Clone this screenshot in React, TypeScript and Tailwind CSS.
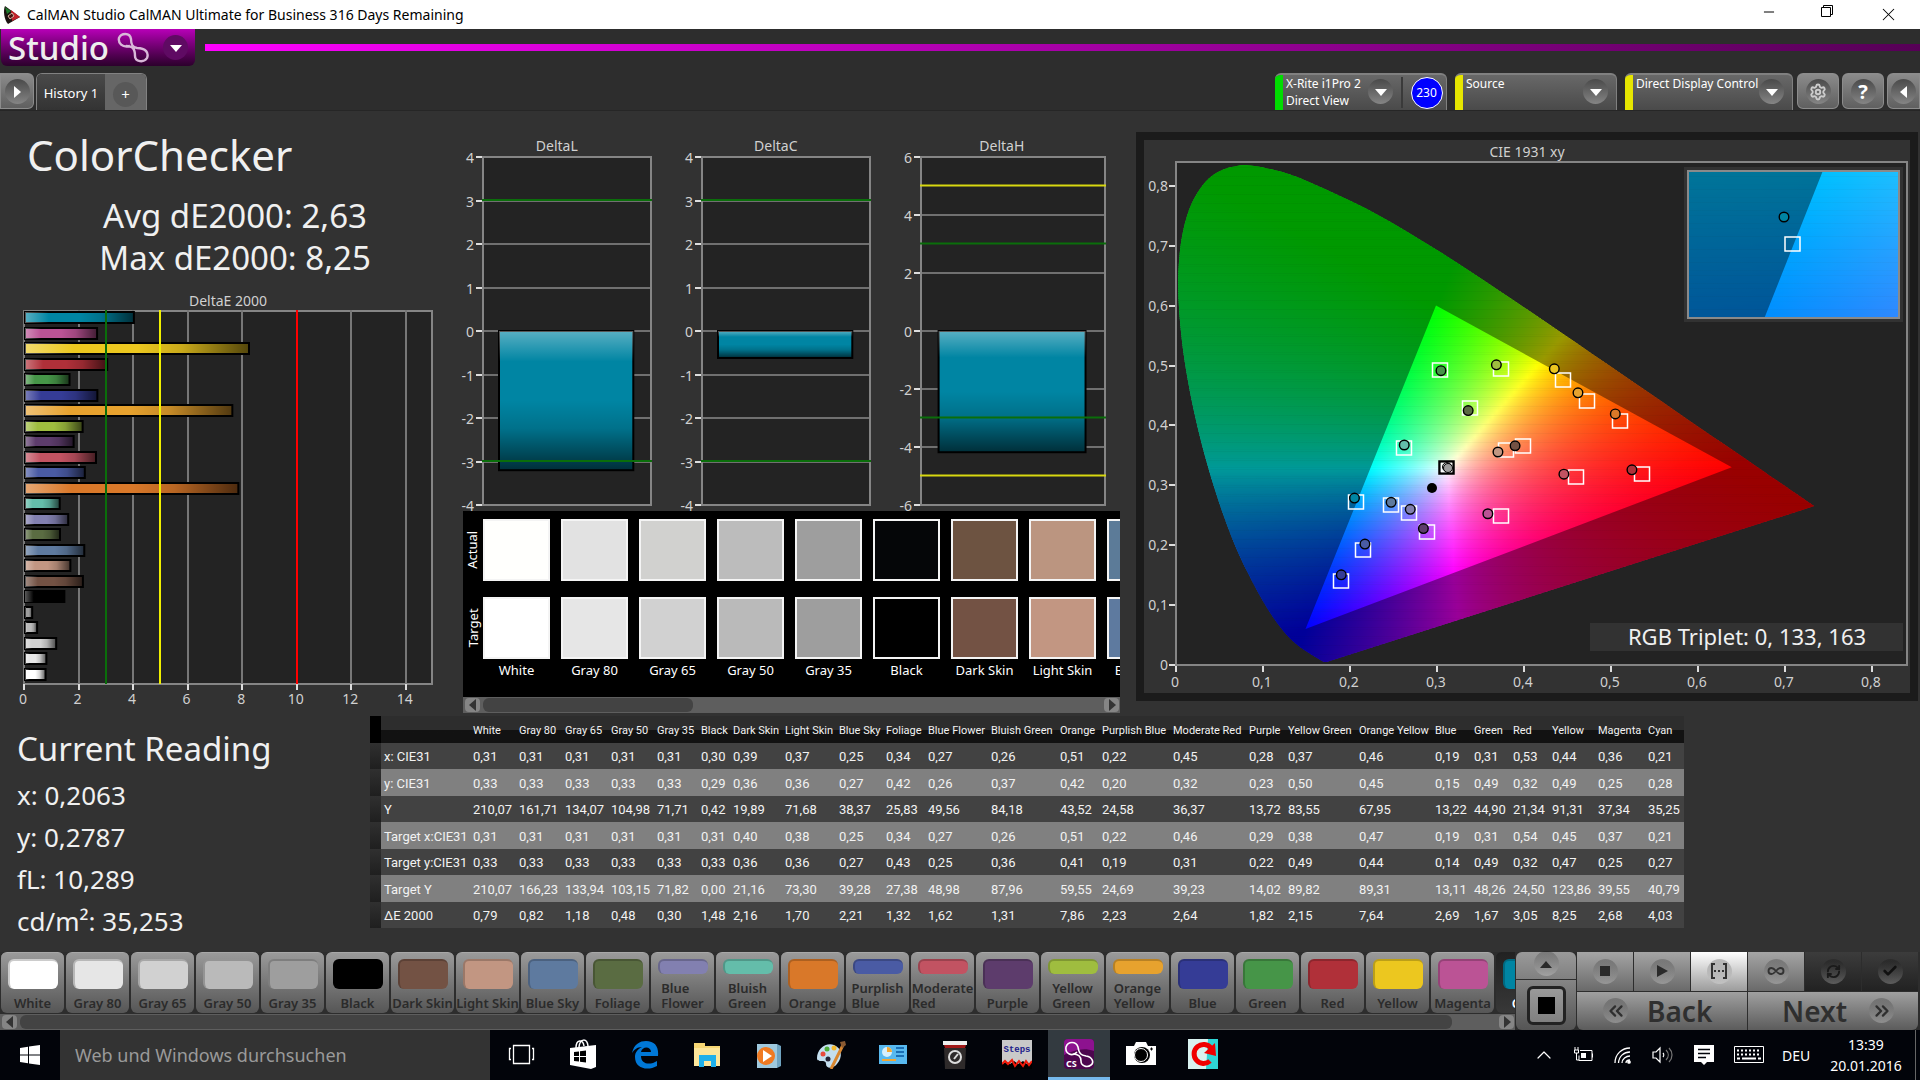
import React from "react";
import {
  Check,
  ChevronUp,
  ChevronsLeft,
  ChevronsRight,
  Infinity as InfinityIcon,
  Minus,
  RefreshCw,
  Settings,
  X,
} from "lucide-react";

type Patch = {
  name: string;
  color: string;
  actual: string;
  values: string[];
  twoLine?: boolean;
};

const patch = (
  name: string,
  color: string,
  actual: string,
  values: string,
  twoLine = false
): Patch => ({ name, color, actual, values: values.split(" "), twoLine });

const patches: Patch[] = [
  patch("White", "#ffffff", "#fffffd", "0,31 0,33 210,07 0,31 0,33 210,07 0,79"),
  patch("Gray 80", "#e6e6e6", "#e2e2e2", "0,31 0,33 161,71 0,31 0,33 166,23 0,82"),
  patch("Gray 65", "#d1d1d1", "#d1d1cf", "0,31 0,33 134,07 0,31 0,33 133,94 1,18"),
  patch("Gray 50", "#bababa", "#bcbcbc", "0,31 0,33 104,98 0,31 0,33 103,15 0,48"),
  patch("Gray 35", "#9e9e9e", "#9e9e9e", "0,31 0,33 71,71 0,31 0,33 71,82 0,30"),
  patch("Black", "#000000", "#050608", "0,30 0,29 0,42 0,31 0,33 0,00 1,48"),
  patch("Dark Skin", "#735244", "#6d5341", "0,39 0,36 19,89 0,40 0,36 21,16 2,16"),
  patch("Light Skin", "#c29682", "#bb9580", "0,37 0,36 71,68 0,38 0,36 73,30 1,70"),
  patch("Blue Sky", "#5e7a9f", "#5c7b98", "0,25 0,27 38,37 0,25 0,27 39,28 2,21"),
  patch("Foliage", "#5a6c42", "#5a6a42", "0,34 0,42 25,83 0,34 0,43 27,38 1,32"),
  patch("Blue Flower", "#8280b0", "#8280b0", "0,27 0,26 49,56 0,27 0,25 48,98 1,62", true),
  patch("Bluish Green", "#64bdaa", "#64bba8", "0,26 0,37 84,18 0,26 0,36 87,96 1,31", true),
  patch("Orange", "#d97829", "#c87b2b", "0,51 0,42 43,52 0,51 0,41 59,55 7,86"),
  patch("Purplish Blue", "#4a5ba4", "#4a5ea2", "0,22 0,20 24,58 0,22 0,19 24,69 2,23", true),
  patch("Moderate Red", "#c25362", "#b85262", "0,45 0,32 36,37 0,46 0,31 39,23 2,64", true),
  patch("Purple", "#5d3c6c", "#5b3d6b", "0,28 0,23 13,72 0,29 0,22 14,02 1,82"),
  patch("Yellow Green", "#9fbd3f", "#99b840", "0,37 0,50 83,55 0,38 0,49 89,82 2,15", true),
  patch("Orange Yellow", "#e7a22e", "#d3a12e", "0,46 0,45 67,95 0,47 0,44 89,31 7,64", true),
  patch("Blue", "#353c96", "#353f92", "0,19 0,15 13,22 0,19 0,14 13,11 2,69"),
  patch("Green", "#469548", "#469048", "0,31 0,49 44,90 0,31 0,49 48,26 1,67"),
  patch("Red", "#b03039", "#a53039", "0,53 0,32 21,34 0,54 0,32 24,50 3,05"),
  patch("Yellow", "#ecc71f", "#d5bf20", "0,44 0,49 91,31 0,45 0,47 123,86 8,25"),
  patch("Magenta", "#bb5395", "#b05492", "0,36 0,25 37,34 0,37 0,25 39,55 2,68"),
  patch("Cyan", "#0085a3", "#0085a3", "0,21 0,28 35,25 0,21 0,27 40,79 4,03"),
];

const rowLabels = [
  "x: CIE31",
  "y: CIE31",
  "Y",
  "Target x:CIE31",
  "Target y:CIE31",
  "Target Y",
  "ΔE 2000",
];

const toNumber = (s: string) => parseFloat(s.replace(",", "."));

/* ---------- header ---------- */

const TitleBar = () => (
  <div className="flex h-[29px] items-center bg-white text-black">
    <svg className="ml-[3px] h-5 w-[18px]" viewBox="0 0 18 20">
      <path d="M2 1 C0 5 1 15 5 19 L17 12 Z" fill="#1c1210" />
      <path d="M2 2 L8 6 L4 9 Z" fill="#1e7a2a" />
      <path d="M8 5 L17 12 L9 16 Z" fill="#c3222a" />
      <path d="M5 11 l4 -3 l2 3 l-4 3 z" fill="#4a1512" stroke="#d8b0a0" />
    </svg>
    <span className="ml-[6px] text-[14px]">
      CalMAN Studio CalMAN Ultimate for Business 316 Days Remaining
    </span>
    <div className="ml-auto flex">
      <button aria-label="Minimize" className="flex w-[58px] justify-center">
        <Minus size={16} strokeWidth={1.5} />
      </button>
      <button aria-label="Restore" className="flex w-[58px] justify-center">
        <svg width="14" height="14" viewBox="0 0 14 14" fill="none" stroke="#000">
          <path d="M1.5 3.5h9v9h-9z M3.5 3.5v-2h9v9h-2" />
        </svg>
      </button>
      <button aria-label="Close" className="flex w-16 justify-center">
        <X size={21} strokeWidth={1.2} />
      </button>
    </div>
  </div>
);

const RoundIcon = ({ children }: { children: React.ReactNode }) => (
  <span className="flex h-[25px] w-[25px] shrink-0 items-center justify-center rounded-full bg-linear-to-b from-[#4a4a4a] to-[#858585] text-white">
    {children}
  </span>
);

const Arrow = ({ d, fill = "#fff" }: { d: string; fill?: string }) => (
  <svg width="12" height="12" viewBox="0 0 12 12">
    <path d={d} fill={fill} />
  </svg>
);

const DOWN = "M0 3h12l-6 7z";
const UP = "M0 10h12l-6 -7z";
const LEFT = "M9 0v12l-7 -6z";
const RIGHT = "M3 0v12l7 -6z";

const StudioBar = () => (
  <div className="flex h-[37px]">
    <button className="ml-px flex h-[37px] w-[194px] items-center rounded-b-md bg-linear-to-b from-[#b800b8] to-[#2c002c] text-[#eee]">
      <span className="ml-[7px] text-[33px] font-medium leading-[34px]">Studio</span>
      <svg className="ml-2 h-8 w-8" viewBox="0 0 32 32" fill="none">
        <path
          d="M13 14 C5 16 1 11 2 6 C4 1 13 0 14 7 C14 12 15 15 20 16 C29 16 32 21 30 26 C27 31 18 30 18 24 C18 17 16 14 9 14"
          stroke="#d9b8d9"
          strokeWidth="2.4"
        />
      </svg>
      <span className="ml-auto mr-[7px] flex h-[25px] w-[25px] items-center justify-center rounded-full bg-[#5f0a63]">
        <Arrow d={DOWN} />
      </span>
    </button>
    <div className="ml-[10px] mt-[15px] h-[7px] flex-1 bg-linear-to-r from-[#ff00ff] to-[#560056]" />
  </div>
);

const SquareButton = ({
  label,
  className,
  children,
}: {
  label: string;
  className: string;
  children: React.ReactNode;
}) => (
  <button
    aria-label={label}
    className={`flex h-9 items-center justify-center border border-t-2 border-[#8c8c8c] bg-linear-to-b from-[#8a8a8a] to-[#606060] ${className}`}
  >
    <RoundIcon>{children}</RoundIcon>
  </button>
);

const DevicePanel = ({
  lines,
  bar,
  className,
  badge,
}: {
  lines: string[];
  bar: string;
  className: string;
  badge?: string;
}) => (
  <div
    className={`flex h-[37px] overflow-hidden rounded-t-md border-t-2 border-r border-[#808080] bg-linear-to-b from-[#686868] to-[#4a4a4a] ${className}`}
  >
    <div className={`w-2 shrink-0 ${bar}`} />
    <button className="flex flex-1 items-start justify-between pl-[3px] text-left text-[12px] leading-[17px] text-white">
      <span className="whitespace-nowrap">
        {lines.map((l) => (
          <span key={l} className="block">
            {l}
          </span>
        ))}
      </span>
      <span className="mr-2 mt-1">
        <RoundIcon>
          <Arrow d={DOWN} />
        </RoundIcon>
      </span>
    </button>
    {badge && (
      <div className="my-[2px] flex w-[45px] items-center justify-center border-l-2 border-[#3a3a3a] pl-1">
        <span className="flex h-8 w-8 items-center justify-center rounded-full border border-white bg-[#0000ff] text-[12px] text-white">
          {badge}
        </span>
      </div>
    )}
  </div>
);

const TabBar = () => (
  <div className="mt-[7px] flex h-[37px] items-start">
    <SquareButton label="Expand" className="w-[34px] rounded-r-md">
      <Arrow d={RIGHT} />
    </SquareButton>
    <div className="ml-[2px] flex h-[37px] overflow-hidden rounded-t-md border border-b-0 border-[#828282]">
      <button className="w-[68px] bg-linear-to-b from-[#4a4a4a] to-[#333] pt-1 text-[13px] text-white">
        History 1
      </button>
      <button
        aria-label="Add history"
        className="flex w-[41px] items-center justify-center bg-[#666] pt-1 text-[15px] text-white"
      >
        <span className="flex h-[25px] w-[25px] items-center justify-center rounded-full bg-[#585858]">
          +
        </span>
      </button>
    </div>
    <div className="ml-auto flex items-start">
      <DevicePanel
        lines={["X-Rite i1Pro 2", "Direct View"]}
        bar="bg-[#00dd00]"
        className="mr-2 w-[172px]"
        badge="230"
      />
      <DevicePanel lines={["Source"]} bar="bg-[#e6e600]" className="mr-2 w-[162px]" />
      <DevicePanel
        lines={["Direct Display Control"]}
        bar="bg-[#e6e600]"
        className="mr-1 w-[168px]"
      />
      <SquareButton label="Settings" className="mr-[3px] w-[42px] rounded-md">
        <Settings size={18} color="#ccc" strokeWidth={2.5} />
      </SquareButton>
      <SquareButton label="Help" className="mr-[3px] w-[42px] rounded-md">
        <span className="text-[20px] font-bold">?</span>
      </SquareButton>
      <SquareButton label="Collapse" className="w-[33px] rounded-l-md">
        <Arrow d={LEFT} />
      </SquareButton>
    </div>
  </div>
);

/* ---------- bar charts ---------- */

const DeltaEChart = () => {
  const x0 = 24;
  const unit = 27.27;
  const top = 20;
  const bottom = 394;
  const ordered = [...patches].reverse();
  return (
    <svg viewBox="0 0 458 420" className="mt-[11px] block w-full" fontSize="14">
      <defs>
        <linearGradient id="shadeH">
          <stop offset="0" stopColor="#fff" stopOpacity="0.35" />
          <stop offset="0.22" stopColor="#fff" stopOpacity="0" />
          <stop offset="0.5" stopColor="#000" stopOpacity="0" />
          <stop offset="0.7" stopColor="#000" stopOpacity="0.15" />
          <stop offset="1" stopColor="#000" stopOpacity="0.65" />
        </linearGradient>
      </defs>
      <text x="228" y="16" textAnchor="middle" fill="#d0d0d0">
        DeltaE 2000
      </text>
      <rect x={x0} y={top + 1} width="408" height={bottom - top - 1} fill="#232323" stroke="#858585" strokeWidth="2" />
      {[0, 2, 4, 6, 8, 10, 12, 14].map((v) => (
        <g key={v}>
          <path d={`M${Math.round(x0 + v * unit)} ${top}V${bottom}`} stroke="#777" strokeWidth="2" />
          <path d={`M${Math.round(x0 + v * unit)} ${bottom}v6`} stroke="#ddd" strokeWidth="2" />
          <text x={x0 + v * unit - 1} y="414" textAnchor="middle" fill="#d0d0d0">
            {v}
          </text>
        </g>
      ))}
      {ordered.map((p, i) => {
        const box = {
          x: x0 + 1,
          y: Math.round(top + 2 + i * 15.5),
          width: toNumber(p.values[6]) * unit - 1,
          height: 11,
        };
        return (
          <g key={p.name}>
            <rect {...box} fill={p.color} stroke="#000" strokeWidth="2" />
            <rect {...box} fill="url(#shadeH)" />
          </g>
        );
      })}
      <path d={`M${Math.round(x0 + 3 * unit)} ${top}V${bottom}`} stroke="#0a6e0a" strokeWidth="2" />
      <path d={`M${Math.round(x0 + 5 * unit)} ${top}V${bottom}`} stroke="#f0f000" strokeWidth="2" />
      <path d={`M${Math.round(x0 + 10 * unit)} ${top}V${bottom}`} stroke="#ff0000" strokeWidth="2" />
    </svg>
  );
};

const DeltaChart = ({
  title,
  limit,
  step,
  value,
  plot,
  marks,
  className,
}: {
  title: string;
  limit: number;
  step: number;
  value: number;
  plot: number;
  marks: { at: number; color: string }[];
  className: string;
}) => {
  const x0 = 24;
  const y = (v: number) => 195 - (v * 174) / limit;
  const ticks: number[] = [];
  for (let v = limit; v >= -limit; v -= step) ticks.push(v);
  const bar = {
    x: x0 + plot * 0.1,
    y: 195,
    width: plot * 0.79,
    height: y(value) - 195,
  };
  return (
    <svg
      viewBox={`0 0 ${x0 + plot + 2} 375`}
      className={`block h-[375px] overflow-visible ${className}`}
      fontSize="14"
    >
      <defs>
        <linearGradient id="shadeV" x2="0" y2="1">
          <stop offset="0" stopColor="#fff" stopOpacity="0.35" />
          <stop offset="0.22" stopColor="#fff" stopOpacity="0" />
          <stop offset="0.5" stopColor="#000" stopOpacity="0" />
          <stop offset="0.7" stopColor="#000" stopOpacity="0.15" />
          <stop offset="1" stopColor="#000" stopOpacity="0.65" />
        </linearGradient>
      </defs>
      <text x={x0 + plot * 0.44} y="15" textAnchor="middle" fill="#d0d0d0">
        {title}
      </text>
      <rect x={x0 + 1} y="21" width={plot - 2} height="348" fill="#232323" />
      {ticks.map((v) => (
        <g key={v}>
          <path d={`M${x0} ${Math.round(y(v))}h${plot - 1}`} stroke="#707070" strokeWidth="2" />
          <path d={`M${x0 - 6} ${Math.round(y(v))}h6`} stroke="#ddd" strokeWidth="2" />
          <text x={x0 - 8} y={y(v) + 6} textAnchor="end" fill="#d0d0d0">
            {v}
          </text>
        </g>
      ))}
      <rect x={x0 + 1} y="21" width={plot - 2} height="348" fill="none" stroke="#858585" strokeWidth="2" />
      <rect {...bar} fill="#0085a3" stroke="#000" strokeWidth="2" />
      <rect {...bar} fill="url(#shadeV)" />
      {marks.map((m) => (
        <path key={m.at} d={`M${x0} ${y(m.at) - 0.5}h${plot}`} stroke={m.color} strokeWidth="2" />
      ))}
    </svg>
  );
};

const GREEN = "#0a6e0a";
const YELLOW = "#d8d810";

/* ---------- swatch strip ---------- */

const Scroller = ({ thumb }: { thumb: string }) => (
  <div className="flex h-4 items-center bg-[#5e5e5e]">
    <button aria-label="Scroll left" className="ml-[2px] flex h-[14px] w-[15px] items-center justify-center rounded-sm bg-[#858585]">
      <Arrow d={LEFT} fill="#333" />
    </button>
    <div className="mx-[3px] h-[14px] flex-1">
      <div className={`h-full rounded-md bg-[#434343] ${thumb}`} />
    </div>
    <button aria-label="Scroll right" className="mr-px flex h-[14px] w-[15px] items-center justify-center rounded-sm bg-[#858585]">
      <Arrow d={RIGHT} fill="#333" />
    </button>
  </div>
);

const SwatchStrip = () => (
  <div className="flex h-[186px] overflow-hidden bg-black text-[13px] text-white">
    <div className="flex w-5 shrink-0 flex-col gap-4 pt-2">
      {["Actual", "Target"].map((t) => (
        <div key={t} className="flex h-[62px] items-center justify-center">
          <span className="-rotate-90">{t}</span>
        </div>
      ))}
    </div>
    <div className="flex gap-[11px] pt-2">
      {patches.slice(0, 9).map((p) => (
        <div key={p.name} className="flex w-[67px] shrink-0 flex-col items-center gap-4">
          <div className="h-[62px] w-full border-2 border-[#f4f4f4]" style={{ background: p.actual }} />
          <div className="h-[62px] w-full border-2 border-[#f4f4f4]" style={{ background: p.color }} />
          <span className="-mt-4 whitespace-nowrap leading-[22px]">{p.name}</span>
        </div>
      ))}
    </div>
  </div>
);

/* ---------- chromaticity diagram ---------- */

const locus: [number, number][] = [
  [0.1741, 0.005], [0.1733, 0.0048], [0.1714, 0.0051], [0.1689, 0.0069],
  [0.1644, 0.0109], [0.1566, 0.0177], [0.144, 0.0297], [0.1355, 0.0399],
  [0.1241, 0.0578], [0.1096, 0.0868], [0.0913, 0.1327], [0.0687, 0.2007],
  [0.0454, 0.295], [0.0235, 0.4127], [0.0082, 0.5384], [0.0039, 0.6548],
  [0.0139, 0.7502], [0.0389, 0.812], [0.0743, 0.8338], [0.1142, 0.8262],
  [0.1547, 0.8059], [0.2296, 0.7543], [0.3016, 0.6923], [0.3731, 0.6245],
  [0.4441, 0.5547], [0.5125, 0.4866], [0.5752, 0.4242], [0.627, 0.3725],
  [0.6658, 0.334], [0.6915, 0.3083], [0.719, 0.2809], [0.7347, 0.2653],
];

const gamut: [number, number][] = [
  [0.64, 0.33],
  [0.3, 0.6],
  [0.15, 0.06],
];

// colour, target x/y, measured x/y
const points: [string, number, number, number, number][] = [
  ["#469548", 0.3046, 0.492, 0.3057, 0.4914],
  ["#9fbd3f", 0.3746, 0.4938, 0.3694, 0.5012],
  ["#ecc71f", 0.4464, 0.4753, 0.436, 0.4944],
  ["#e7a22e", 0.4737, 0.4407, 0.4632, 0.4543],
  ["#d97829", 0.5113, 0.4074, 0.5061, 0.4191],
  ["#5a6c42", 0.3393, 0.4284, 0.337, 0.4247],
  ["#64bdaa", 0.2635, 0.3623, 0.2635, 0.3673],
  ["#c29682", 0.3804, 0.3586, 0.3712, 0.3556],
  ["#735244", 0.4001, 0.3654, 0.3909, 0.366],
  ["#c25362", 0.4609, 0.3136, 0.447, 0.3185],
  ["#b03039", 0.5368, 0.3185, 0.5252, 0.3259],
  ["#bb5395", 0.3746, 0.2481, 0.3596, 0.2525],
  ["#0085a3", 0.2078, 0.2715, 0.2063, 0.2787],
  ["#5e7a9f", 0.2484, 0.2667, 0.2484, 0.2716],
  ["#8280b0", 0.2687, 0.2531, 0.2704, 0.2599],
  ["#5d3c6c", 0.2901, 0.2222, 0.2855, 0.2278],
  ["#4a5ba4", 0.216, 0.192, 0.2183, 0.2019],
  ["#353c96", 0.1911, 0.1407, 0.1911, 0.1506],
];

const chromaColor = (x: number, y: number) => {
  const z = 1 - x - y;
  const r = Math.max(0, 3.2406 * x - 1.5372 * y - 0.4986 * z);
  const g = Math.max(0, -0.9689 * x + 1.8758 * y + 0.0415 * z);
  const b = Math.max(0, 0.0557 * x - 0.204 * y + 1.057 * z);
  const m = Math.max(r, g, b, 0.0001) / 255;
  return `rgb(${Math.round(r / m)},${Math.round(g / m)},${Math.round(b / m)})`;
};

type View = {
  px: (x: number) => number;
  py: (y: number) => number;
  x: [number, number];
  y: [number, number];
  rows: number;
  stops: number;
};

// One horizontal gradient strip per row approximates the full colour plane.
const ColorPlane = ({ id, view }: { id: string; view: View }) => {
  const { px, py, rows, stops } = view;
  const [xa, xb] = view.x;
  const [ya, yb] = view.y;
  const h = (yb - ya) / rows;
  return (
    <>
      {Array.from({ length: rows }, (_, r) => {
        const y = ya + (r + 0.5) * h;
        return (
          <g key={r}>
            <linearGradient id={`${id}${r}`}>
              {Array.from({ length: stops + 1 }, (_, s) => (
                <stop
                  key={s}
                  offset={s / stops}
                  stopColor={chromaColor(xa + ((xb - xa) * s) / stops, y)}
                />
              ))}
            </linearGradient>
            <rect
              x={px(xa)}
              y={py(y + h / 2)}
              width={px(xb) - px(xa)}
              height={py(y - h / 2) - py(y + h / 2) + 0.6}
              fill={`url(#${id}${r})`}
            />
          </g>
        );
      })}
    </>
  );
};

const main: View = {
  px: (x) => 31 + x * 870,
  py: (y) => 525 - y * 599,
  x: [0, 0.74],
  y: [0, 0.84],
  rows: 280,
  stops: 148,
};

const inset: View = {
  px: (x) => 649 + (x - 0.2086) * 5325,
  py: (y) => 104 - (y - 0.2715) * 3725,
  x: [0.1876, 0.2296],
  y: [0.2505, 0.2925],
  rows: 60,
  stops: 20,
};

const polygon = (pts: [number, number][], v: View) =>
  pts.map(([x, y]) => `${v.px(x)} ${v.py(y)}`).join("L");

const smoothLocus = () => {
  const p = locus.map(([x, y]) => [main.px(x), main.py(y)]);
  let d = `M${p[0][0]} ${p[0][1]}`;
  for (let i = 0; i < p.length - 1; i++) {
    const a = p[Math.max(0, i - 1)];
    const b = p[i];
    const c = p[i + 1];
    const e = p[Math.min(p.length - 1, i + 2)];
    d += `C${b[0] + (c[0] - a[0]) / 6} ${b[1] + (c[1] - a[1]) / 6} ${c[0] - (e[0] - b[0]) / 6} ${
      c[1] - (e[1] - b[1]) / 6
    } ${c[0]} ${c[1]}`;
  }
  return d + "Z";
};

const CieChart = () => (
  <svg viewBox="0 0 766 553" className="block w-full bg-[#323232]" fontSize="14" fill="#d0d0d0">
    <defs>
      <clipPath id="locus">
        <path d={smoothLocus()} />
      </clipPath>
      <clipPath id="insetBox">
        <rect x="544" y="31" width="211" height="147" />
      </clipPath>
    </defs>
    <text x="383" y="17" textAnchor="middle">
      CIE 1931 xy
    </text>
    <rect x="32" y="22" width="731" height="503" fill="#232323" stroke="#858585" strokeWidth="2" />
    {[0, 1, 2, 3, 4, 5, 6, 7, 8].map((v) => {
      const label = v === 0 ? "0" : `0,${v}`;
      const x = Math.round(main.px(v / 10));
      const y = Math.round(main.py(v / 10));
      return (
        <g key={v}>
          <path d={`M${x + 1} 526v6M31 ${y}h-6`} stroke="#ddd" strokeWidth="2" />
          <text x={x} y="547" textAnchor="middle">
            {label}
          </text>
          <text x="24" y={y + 5} textAnchor="end">
            {label}
          </text>
        </g>
      );
    })}
    <g clipPath="url(#locus)">
      <ColorPlane id="m" view={main} />
      <path
        d={`M0 0H766V553H0ZM${polygon(gamut, main)}Z`}
        fillRule="evenodd"
        fill="#000"
        fillOpacity="0.4"
      />
    </g>
    {points.map(([c, tx, ty]) => (
      <rect
        key={c}
        x={Math.round(main.px(tx)) - 7.5}
        y={Math.round(main.py(ty)) - 7}
        width="15"
        height="14"
        fill="none"
        stroke="#fff"
        strokeWidth="1.5"
      />
    ))}
    {points.map(([c, , , x, y]) => (
      <circle key={c} cx={main.px(x)} cy={main.py(y)} r="4.8" fill={c} stroke="#000" strokeWidth="1.4" />
    ))}
    <rect x="295.5" y="321.5" width="14" height="12" fill="none" stroke="#000" strokeWidth="2.5" />
    <rect x="297.5" y="323.5" width="10" height="8" fill="none" stroke="#fff" strokeWidth="1.5" />
    <circle cx="303" cy="327" r="4.5" fill="#ddd" stroke="#000" />
    <circle cx="304" cy="328" r="4.5" fill="#9e9e9e" stroke="#000" />
    <circle cx="288" cy="348" r="5" fill="#000" />

    <rect x="540" y="27" width="219" height="155" fill="#323232" />
    <g clipPath="url(#insetBox)">
      <ColorPlane id="i" view={inset} />
      <path
        d={`M500 0H766V300H500ZM${polygon(gamut, inset)}Z`}
        fillRule="evenodd"
        fill="#000"
        fillOpacity="0.4"
      />
    </g>
    <rect x="544" y="31" width="211" height="147" fill="none" stroke="#8a8a8a" strokeWidth="2" />
    <rect x="641" y="97" width="15" height="14" fill="none" stroke="#fff" strokeWidth="1.5" />
    <circle cx="640" cy="77" r="4.8" fill="#0085a3" stroke="#000" strokeWidth="1.4" />

    <rect x="446" y="483" width="313" height="28" fill="#323232" />
    <text x="603" y="505" fontSize="22" textAnchor="middle" fill="#f0f0f0">
      RGB Triplet: 0, 133, 163
    </text>
  </svg>
);

/* ---------- data table ---------- */

const columns = [
  "w-[46px]", "w-[46px]", "w-[46px]", "w-[46px]", "w-[44px]", "w-[32px]",
  "w-[52px]", "w-[54px]", "w-[47px]", "w-[42px]", "w-[63px]", "w-[69px]",
  "w-[42px]", "w-[71px]", "w-[76px]", "w-[39px]", "w-[71px]", "w-[76px]",
  "w-[39px]", "w-[39px]", "w-[39px]", "w-[46px]", "w-[50px]", "w-[39px]",
];

const DataTable = () => (
  <table className="w-[1314px] table-fixed border-collapse whitespace-nowrap text-left font-['Roboto','Open_Sans',sans-serif] text-[13px] text-[#f2f2f2]">
    <colgroup>
      <col className="w-[11px]" />
      <col className="w-[89px]" />
      {columns.map((c, i) => (
        <col key={i} className={c} />
      ))}
    </colgroup>
    <thead>
      <tr className="h-[27px] bg-linear-to-b from-[#2d2d2d] from-50% to-[#121212] to-50% text-[11px]">
        <td className="bg-black" />
        <td />
        {patches.map((p) => (
          <th key={p.name} className="p-0 pl-[3px] pt-1 font-normal">
            {p.name}
          </th>
        ))}
      </tr>
    </thead>
    <tbody>
      {rowLabels.map((label, r) => (
        <tr key={label} className={r % 2 ? "h-[27px] bg-[#808080]" : "h-[26px] bg-[#424242]"}>
          <td className="bg-linear-to-b from-[#303030] to-[#1f1f1f]" />
          <th className="p-0 pl-[3px] pt-[2px] font-normal">{label}</th>
          {patches.map((p) => (
            <td key={p.name} className="p-0 pl-[3px] pt-[2px]">
              {p.values[r]}
            </td>
          ))}
        </tr>
      ))}
    </tbody>
  </table>
);

/* ---------- bottom controls ---------- */

const PatchButton = ({ p, active }: { p: Patch; active: boolean }) => (
  <button
    className={`flex h-[61px] w-[63px] shrink-0 flex-col items-center rounded-md border-t pt-[6px] text-[13px] font-semibold leading-[15px] ${
      active
        ? "border-[#222] bg-linear-to-b from-[#222] to-[#383838] text-white"
        : "border-[#a8a8a8] bg-linear-to-b from-[#9a9a9a] to-[#565656] text-[#2b2b2b]"
    }`}
  >
    <span
      className={`w-[50px] shrink-0 rounded-md border-t-2 border-l-2 border-black/20 ${
        p.twoLine ? "h-[15px]" : "h-[30px]"
      }`}
      style={{ backgroundColor: p.color }}
    />
    <span className={`mt-[7px] text-left ${p.twoLine ? "" : "whitespace-nowrap"}`}>
      {p.twoLine
        ? p.name.split(" ").map((w) => (
            <span key={w} className="block">
              {w}
            </span>
          ))
        : p.name}
    </span>
  </button>
);

const Disc = ({ children }: { children: React.ReactNode }) => (
  <span className="flex h-[25px] w-[25px] items-center justify-center rounded-full bg-linear-to-b from-black/20 to-white/25">
    {children}
  </span>
);

const transport = [
  { label: "Stop", tone: "from-[#a5a5a5] to-[#6a6a6a]", icon: <span className="h-[10px] w-[10px] bg-[#2a2a2a]" /> },
  { label: "Play", tone: "from-[#a5a5a5] to-[#6a6a6a]", icon: <Arrow d="M1 0v12l11 -6z" fill="#2a2a2a" /> },
  {
    label: "Read series",
    tone: "from-[#ffffff] to-[#9c9c9c]",
    icon: (
      <svg width="16" height="16" viewBox="0 0 16 16" fill="none" stroke="#333" strokeWidth="2">
        <path d="M4 1H1v14h3M12 1h3v14h-3" />
        <path d="M3 8h10" strokeDasharray="2 2" />
      </svg>
    ),
  },
  { label: "Continuous", tone: "from-[#a5a5a5] to-[#6a6a6a]", icon: <InfinityIcon size={18} strokeWidth={2.5} color="#333" /> },
  { label: "Refresh", tone: "from-[#3c3c3c] to-[#222]", icon: <RefreshCw size={15} strokeWidth={3} color="#1a1a1a" /> },
  { label: "Accept", tone: "from-[#3c3c3c] to-[#222]", icon: <Check size={16} strokeWidth={4} color="#111" /> },
];

const ControlBar = () => (
  <div className="flex h-[78px] bg-[#2d2d2d]">
    <div className="flex min-w-0 flex-1 flex-col justify-between">
      <div className="flex gap-[2px] overflow-hidden pl-px">
        {patches.map((p) => (
          <PatchButton key={p.name} p={p} active={p.name === "Cyan"} />
        ))}
      </div>
      <Scroller thumb="w-[97%]" />
    </div>
    <div className="ml-px mr-px flex w-[60px] flex-col gap-px">
      <button aria-label="Show more" className="flex h-[27px] items-center justify-center rounded-t-md bg-linear-to-b from-[#9a9a9a] to-[#808080] pb-1">
        <Disc>
          <Arrow d={UP} fill="#2a2a2a" />
        </Disc>
      </button>
      <button aria-label="Pattern window" className="flex flex-1 items-center justify-center rounded-b-md bg-linear-to-b from-[#858585] to-[#555]">
        <span className="flex h-[39px] w-[39px] items-center justify-center rounded-md border-[3px] border-[#222] bg-linear-to-b from-[#9a9a9a] to-[#808080]">
          <span className="h-[17px] w-[17px] bg-black" />
        </span>
      </button>
    </div>
    <div className="grid w-[343px] grid-cols-6 grid-rows-2 gap-px pr-[2px]">
      {transport.map((t) => (
        <button
          key={t.label}
          aria-label={t.label}
          className={`flex items-center justify-center bg-linear-to-b ${t.tone}`}
        >
          <Disc>{t.icon}</Disc>
        </button>
      ))}
      <button className="col-span-3 flex items-center rounded-bl-md bg-linear-to-b from-[#a0a0a0] to-[#5c5c5c] pl-[26px] text-[28px] font-semibold leading-8 text-[#2f2f2f]">
        <Disc>
          <ChevronsLeft size={22} strokeWidth={2.5} />
        </Disc>
        <span className="ml-[19px]">Back</span>
      </button>
      <button className="col-span-3 flex items-center justify-end rounded-br-md bg-linear-to-b from-[#a0a0a0] to-[#5c5c5c] pr-6 text-[28px] font-semibold leading-8 text-[#2f2f2f]">
        <span className="mr-[22px]">Next</span>
        <Disc>
          <ChevronsRight size={22} strokeWidth={2.5} />
        </Disc>
      </button>
    </div>
  </div>
);

/* ---------- windows taskbar ---------- */

const apps: { label: string; active?: boolean; icon: React.ReactNode }[] = [
  {
    label: "Task view",
    icon: (
      <path d="M7.5 6.5h16v18h-16zM5 9.5H3.5v11H5M26 9.5h1.5v11H26" fill="none" stroke="#fff" strokeWidth="1.3" />
    ),
  },
  {
    label: "Store",
    icon: (
      <>
        <path d="M8 9C8 0 15 0 16 7M11 8c1-9 8-9 9-1" fill="none" stroke="#fff" strokeWidth="1.5" />
        <path d="M2 9l26-3v22l-5 2-21-4z" fill="#fff" />
        <path d="M6 13l5-.6v4.6H6zM12 12.2l6-.8v5.600h-6zM6 18h5v4.600l-5-.6zM12 18h6v5.600l-6-.8z" fill="#000" />
      </>
    ),
  },
  {
    label: "Edge",
    icon: (
      <path
        d="M2 14C4 5 10 2 16 2c9 0 13 6 12 15H11c0 9 10 9 16 5v5c-9 5-22 3-22-9 0-5 3-8 7-10-5 0-8 3-10 6zM11 13h10c0-6-9-6-10 0z"
        fill="#0078d7"
      />
    ),
  },
  {
    label: "File Explorer",
    icon: (
      <>
        <path d="M2 4h11v3h15v20H2z" fill="#f7d774" />
        <path d="M2 9h26v18H2z" fill="#fde69a" />
        <path d="M7 28V16h17v12h-5v-6h-7v6z" fill="#1fb0ea" />
      </>
    ),
  },
  {
    label: "Media Player",
    icon: (
      <>
        <path d="M3 5h20l4 2v20l-4 2H3z" fill="#6fa3c0" />
        <path d="M3 5h20v24H3z" fill="#9fc9de" />
        <circle cx="12" cy="17" r="9" fill="#f07a22" />
        <path d="M9 11v12l9-6z" fill="#fff" />
      </>
    ),
  },
  {
    label: "Paint",
    icon: (
      <>
        <path d="M1 19C1 10 10 3 18 6c8 3 9 12 3 19-4 5-11 5-11 0 0-6-9 0-9-6z" fill="#c4dfef" />
        <circle cx="7" cy="15" r="2.5" fill="#e84b3c" />
        <circle cx="11" cy="10" r="2.5" fill="#4fae3a" />
        <circle cx="18" cy="9" r="2.5" fill="#f4b92c" />
        <circle cx="12" cy="20" r="2.5" fill="#223" />
        <path d="M27 6L15 30" stroke="#d98730" strokeWidth="3" />
        <path d="M24 3l5-1 1 4-4 3z" fill="#8a5a32" />
      </>
    ),
  },
  {
    label: "Control Panel",
    icon: (
      <>
        <path d="M1 6h28v19H1z" fill="#58b9ef" />
        <circle cx="9" cy="13" r="5" fill="#d6effc" />
        <path d="M9 13V8a5 5 0 0 1 5 5z" fill="#f3a833" />
        <path d="M18 9h8M18 13h8M18 17h8" stroke="#1b6fb5" strokeWidth="2" />
        <path d="M4 21h14" stroke="#f3a833" strokeWidth="2" />
      </>
    ),
  },
  {
    label: "Storage utility",
    icon: (
      <>
        <path d="M3 2h24v4H3z" fill="#eee" />
        <path d="M4 6h22l-1 3H5z" fill="#a01818" />
        <path d="M4 9h22l-1 21H5z" fill="#2e2a2a" />
        <circle cx="15" cy="18" r="6" fill="none" stroke="#ddd" strokeWidth="2" />
        <path d="M14 20l4-5" stroke="#ddd" strokeWidth="2" />
      </>
    ),
  },
  {
    label: "Steps",
    icon: (
      <>
        <path d="M0 1h30v29H0z" fill="#c9c9c9" />
        <path d="M0 25l4-2 4 2 4-3 4 3 5-3 4 3 5-2v7H0z" fill="#000" />
        <path d="M0 25l3-3 3 3 4-4 3 6 4-5 4 5 3-5 3 4 3-4" fill="none" stroke="#f21a0a" strokeWidth="2" />
        <text x="15" y="13" textAnchor="middle" fontSize="9" fontWeight="700" fill="#20208a" fontFamily="Liberation Mono, monospace">
          Steps
        </text>
      </>
    ),
  },
  {
    label: "CalMAN Studio",
    active: true,
    icon: (
      <>
        <rect x="0" y="0" width="30" height="30" rx="4" fill="#4d064f" />
        <path d="M0 4a4 4 0 0 1 4-4h22a4 4 0 0 1 4 4v8C18 8 10 12 0 16z" fill="#8d128f" />
        <path
          d="M13 13C8 18 1 15 2 8 4 2 12 2 14 8c1 7 3 8 8 9 7 1 8 7 5 9-4 3-10 1-10-4 0-5-3-7-8-7"
          fill="none"
          stroke="#fff"
          strokeWidth="1.6"
        />
        <text x="2" y="28" fontSize="9" fontWeight="700" fill="#fff">
          CS
        </text>
      </>
    ),
  },
  {
    label: "Camera",
    icon: (
      <>
        <path d="M0 7h8l2-4h10l2 4h8v19H0z" fill="#fff" />
        <circle cx="16" cy="16" r="8" fill="#000" />
        <circle cx="15" cy="16" r="6.5" fill="#000" stroke="#fff" />
        <path d="M24 10h3M25.5 8.500v3" stroke="#000" />
      </>
    ),
  },
  {
    label: "Color tool",
    icon: (
      <>
        <path d="M0 0h30v30H0z" fill="#d9f2f0" />
        <path d="M20 0h10v30H18z" fill="#2fd6d6" />
        <path d="M23 9A9.5 9.5 0 1 0 22 22" fill="none" stroke="#f00000" strokeWidth="5" />
        <path d="M27 4l1 13-12-3z" fill="#f00000" />
      </>
    ),
  },
];

const Taskbar = () => (
  <div className="flex h-[50px] items-stretch bg-[#02040a] text-white">
    <button aria-label="Start" className="flex w-[60px] items-center justify-center">
      <svg width="20" height="20" viewBox="0 0 20 20" fill="#fff">
        <path d="M0 3l8-1.2v7.700H0zM9 1.600L20 0v9.500H9zM0 10.500h8v7.700L0 17zM9 10.500h11V20L9 18.400z" />
      </svg>
    </button>
    <input
      aria-label="Search"
      placeholder="Web und Windows durchsuchen"
      className="w-[430px] bg-[#333] pl-[15px] text-[18px] placeholder-[#9a9a9a] outline-none"
    />
    {apps.map((a) => (
      <button
        key={a.label}
        aria-label={a.label}
        className={`flex w-[62px] items-center justify-center border-b-[3px] ${
          a.active ? "border-[#76b9ed] bg-[#333a40]" : "border-transparent"
        }`}
      >
        <svg width="30" height="30" viewBox="0 0 30 30">
          {a.icon}
        </svg>
      </button>
    ))}
    <div className="ml-auto flex items-center">
      <button aria-label="Show hidden icons" className="flex w-10 justify-center">
        <ChevronUp size={24} strokeWidth={1.2} />
      </button>
      <svg className="mx-[10px]" width="20" height="18" viewBox="0 0 20 18" fill="none" stroke="#fff">
        <path d="M6 4.500h12v10H5v-5M18.500 7.500v4" />
        <path d="M7 7h5v5H7z" fill="#fff" stroke="none" />
        <path d="M1 1v3M4 1v3M0.500 4h4v3h-4zM2.500 7v7H5" />
      </svg>
      <svg className="mx-[10px]" width="18" height="18" viewBox="0 0 18 18" fill="none" stroke="#fff" strokeWidth="1.3">
        <path d="M1 17C1 8 8 2 16 2M4.500 17C5 10 10 6 16 6M8 17c0-4 4-7 8-7M12 17c0-2 2-3 4-3" />
        <circle cx="15" cy="16" r="1.2" fill="#fff" />
      </svg>
      <svg className="mx-[10px]" width="22" height="20" viewBox="0 0 22 20" fill="none" stroke="#fff" strokeWidth="1.2">
        <path d="M1 7h3l4-4v14l-4-4H1zM11 8c1 1 1 3 0 4" />
        <path d="M14 5c3 3 3 7 0 10M17 3c4 4 4 10 0 14" stroke="#777" />
      </svg>
      <svg className="mx-[10px]" width="20" height="20" viewBox="0 0 20 20">
        <path d="M0 0h20v17h-7l-3 3-3-3H0z" fill="#fff" />
        <path d="M4 4.500h12M4 8.500h12M4 12.500h8" stroke="#02040a" strokeWidth="1.5" />
      </svg>
      <svg className="mx-[10px]" width="30" height="18" viewBox="0 0 30 18" fill="none" stroke="#fff">
        <path d="M0.500 0.500h29v16h-29z" />
        <path d="M3 4.500h24M3 8.500h24" strokeDasharray="2 2" strokeWidth="2" />
        <path d="M3 12.500h3M8 12.500h14M24 12.500h3" strokeWidth="2" />
      </svg>
      <span className="ml-2 w-[30px] text-[14px]">DEU</span>
      <div className="ml-4 w-[76px] text-center text-[14px] leading-[21px]">
        <div>13:39</div>
        <div>20.01.2016</div>
      </div>
      <div className="ml-[11px] mr-1 h-[50px] w-px bg-[#666]" />
    </div>
  </div>
);

const App = () => (
  <div className="flex min-h-screen flex-col bg-[#2d2d2d] font-['Noto_Sans','Open_Sans',sans-serif]">
    <TitleBar />
    <StudioBar />
    <TabBar />

    <main className="flex-1 border-t border-[#262626] bg-[#323232] text-[#f0f0f0]">
      <div className="flex h-[604px] items-start">
        <section className="w-[458px] pt-[20px]">
          <h1 className="pl-[27px] text-[42px] leading-[48px]">ColorChecker</h1>
          <div className="mt-4 pl-3 text-center text-[33px] leading-[42px]">
            <p>Avg dE2000: 2,63</p>
            <p>Max dE2000: 8,25</p>
          </div>
          <DeltaEChart />
        </section>

        <section className="w-[662px] pt-[25px]">
          <div className="flex justify-between pr-3">
            <DeltaChart
              title="DeltaL"
              limit={4}
              step={1}
              value={-3.2}
              plot={170}
              marks={[{ at: 3, color: GREEN }, { at: -3, color: GREEN }]}
              className="w-[196px]"
            />
            <DeltaChart
              title="DeltaC"
              limit={4}
              step={1}
              value={-0.62}
              plot={170}
              marks={[{ at: 3, color: GREEN }, { at: -3, color: GREEN }]}
              className="w-[196px]"
            />
            <DeltaChart
              title="DeltaH"
              limit={6}
              step={2}
              value={-4.18}
              plot={186}
              marks={[
                { at: 5, color: YELLOW },
                { at: 3, color: GREEN },
                { at: -3, color: GREEN },
                { at: -5, color: YELLOW },
              ]}
              className="w-[212px]"
            />
          </div>
          <div className="pl-[5px]">
            <SwatchStrip />
            <Scroller thumb="w-[34%]" />
          </div>
        </section>

        <section className="ml-4 mr-[2px] mt-[21px] flex-1 border-8 border-[#1b1b1b]">
          <CieChart />
        </section>
      </div>

      <div className="flex items-start">
        <section className="w-[370px] pl-[17px] pt-[14px]">
          <h2 className="text-[33px] leading-[40px]">Current Reading</h2>
          <div className="mt-[5px] text-[26px] leading-[42px]">
            <p>x: 0,2063</p>
            <p>y: 0,2787</p>
            <p>fL: 10,289</p>
            <p>cd/m²: 35,253</p>
          </div>
        </section>
        <div className="pt-px">
          <DataTable />
        </div>
      </div>
    </main>

    <ControlBar />
    <Taskbar />
  </div>
);

export default App;
